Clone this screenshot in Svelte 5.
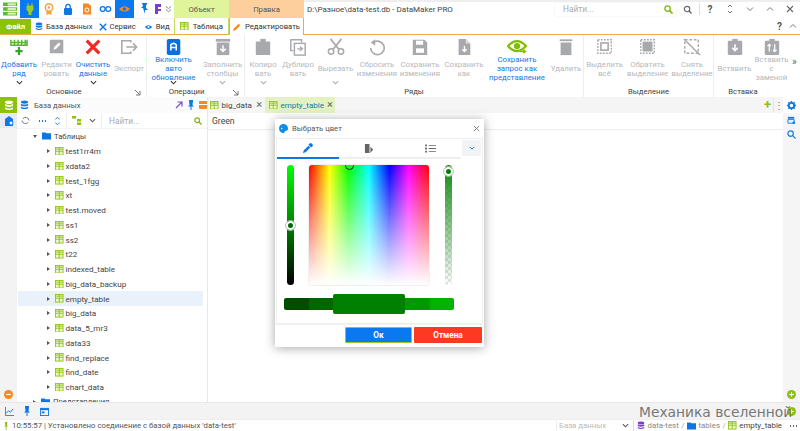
<script>
const groups = [
  { title: 'Основное', width: 147, arrow: true, items: [
    { w: 38, icon: 'add', lines: ['Добавить', 'ряд'], on: true, more: true },
    { w: 37, icon: 'edit', lines: ['Редакти', 'ровать'] },
    { w: 36, icon: 'clear', lines: ['Очистить', 'данные'], on: true, more: true },
    { w: 36, icon: 'export', lines: ['Экспорт'] }
  ]},
  { title: 'Операции', width: 98, arrow: true, items: [
    { w: 53, icon: 'auto', lines: ['Включить', 'авто', 'обновление'], on: true, more: true },
    { w: 45, icon: 'fill', lines: ['Заполнить', 'столбцы'], more: true }
  ]},
  { title: 'Ряды', width: 339, items: [
    { w: 36, icon: 'copy', lines: ['Копиро', 'вать'], more: true },
    { w: 34, icon: 'dup', lines: ['Дублиро', 'вать'] },
    { w: 41, icon: 'cut', lines: ['Вырезать'], more: true },
    { w: 42, icon: 'reset', lines: ['Сбросить', 'изменения'] },
    { w: 44, icon: 'save', lines: ['Сохранить', 'изменения'] },
    { w: 44, icon: 'saveas', lines: ['Сохранить', 'как'] },
    { w: 62, icon: 'view', lines: ['Сохранить', 'запрос как', 'представление'], on: true },
    { w: 36, icon: 'trash', lines: ['Удалить'] }
  ]},
  { title: 'Выделение', width: 130, items: [
    { w: 41, icon: 'selall', lines: ['Выделить', 'всё'] },
    { w: 45, icon: 'invert', lines: ['Обратить', 'выделение'] },
    { w: 44, icon: 'unsel', lines: ['Снять', 'выделение'] }
  ]},
  { title: 'Вставка', width: 86, last: true, items: [
    { w: 41, icon: 'paste', lines: ['Вставить'] },
    { w: 33, icon: 'pastere', lines: ['Вставить', 'с', 'заменой'] }
  ]}
];
const tables = ['test1rr4m','xdata2','test_1fgg','xt','test.moved','ss1','ss2','t22','indexed_table','big_data_backup','empty_table','big_data','data_5_mr3','data33','find_replace','find_date','chart_data'];
const G = '#a7a9ac';
</script>

{#snippet tbl()}
  <svg class="tbl" viewBox="0 0 10 10"><rect x=".5" y=".5" width="9" height="9" fill="#eaf5c8" stroke="#8cc20a"/><path d="M.5 5h9M5 .5v9M.5 2.500h9" stroke="#8cc20a" fill="none"/></svg>
{/snippet}

{#snippet icon(n)}
  <svg class="ric" viewBox="0 0 22 20">
    {#if n === 'add'}
      <path d="M2 2v6h18V2M2 5h18M6 2v6M10 2v6M14 2v6M18 2v6" stroke="#57b52e" stroke-width="1.6" fill="none"/><path d="M11 10v9M7 14.500h8" stroke="#37a52a" stroke-width="2.400"/>
    {:else if n === 'edit'}
      <rect x="3" y="2" width="15" height="15" rx="1" fill={G}/><path d="M7 13l1-3 5-5 2 2-5 5z" fill="#fff"/>
    {:else if n === 'clear'}
      <path d="M4 3l14 14M18 3L4 17" stroke="#ee2a24" stroke-width="3.600"/>
    {:else if n === 'export'}
      <path d="M13 5V3H3v14h10v-2" stroke={G} stroke-width="1.700" fill="none"/><path d="M8 10h11M15.500 6l4 4-4 4" stroke={G} stroke-width="1.700" fill="none"/>
    {:else if n === 'auto'}
      <rect x="3" y="1" width="15" height="18" rx="2" fill="#0a6fe0"/><path d="M7.500 14V7.500q3-3 6 0V14M7.500 10.500h6" stroke="#fff" stroke-width="1.700" fill="none"/>
    {:else if n === 'fill'}
      <rect x="3" y="1" width="16" height="3" fill={G}/><rect x="4" y="5" width="14" height="14" fill={G}/><path d="M11 8v7M8 12l3 3 3-3" stroke="#fff" stroke-width="1.600" fill="none"/>
    {:else if n === 'copy'}
      <rect x="3" y="4" width="16" height="15" rx="1" fill={G}/><rect x="8" y="1" width="6" height="4" fill={G}/>
    {:else if n === 'dup'}
      <path d="M6 14H3V2h12v3" stroke={G} stroke-width="1.600" fill="none"/><rect x="7" y="6" width="12" height="13" stroke={G} stroke-width="1.600" fill="none"/><path d="M10 12h6M13 9.500l3 2.500-3 2.500" stroke={G} fill="none" stroke-width="1.300"/>
    {:else if n === 'cut'}
      <circle cx="5.500" cy="15" r="3" stroke={G} stroke-width="1.700" fill="none"/><circle cx="16.500" cy="15" r="3" stroke={G} stroke-width="1.700" fill="none"/><path d="M7.500 13L17 1M14.500 13L5 1" stroke={G} stroke-width="1.900"/>
    {:else if n === 'reset'}
      <path d="M7 5a7.500 7.500 0 1 1-3 6" stroke={G} stroke-width="1.800" fill="none"/><path d="M9 1.500L4 5l5 3.500z" fill={G}/>
    {:else if n === 'save'}
      <path d="M3 2h13l3 3v14H3z" fill={G}/><rect x="6.500" y="3" width="8" height="4.500" fill="#fff"/><rect x="6.500" y="11.500" width="9" height="5" fill="#fff"/>
    {:else if n === 'saveas'}
      <path d="M5 1h8l5 5v13H5z" fill={G}/><path d="M13 1v5h5" fill="#ddd"/><path d="M11.500 9v6M9 12.500l2.500 2.500 2.500-2.500" stroke="#fff" stroke-width="1.500" fill="none"/>
    {:else if n === 'view'}
      <path d="M1 9q10-11 20 0-10 11-20 0z" fill="none" stroke="#7fbf00" stroke-width="2.400"/><circle cx="11" cy="9" r="3.500" fill="#7fbf00"/><path d="M14 15h6M18 13l2.500 2-2.500 2" stroke="#7fbf00" stroke-width="1.500" fill="#fff"/>
    {:else if n === 'trash'}
      <rect x="4" y="1.500" width="14" height="2" fill={G}/><path d="M5 5h12v14H5z" fill={G}/>
    {:else if n === 'selall'}
      <rect x="3" y="2" width="15" height="15" fill="none" stroke={G} stroke-width="1.600" stroke-dasharray="2 1.400"/><rect x="6.500" y="5.500" width="8" height="8" fill="none" stroke={G} stroke-width="1.800"/>
    {:else if n === 'invert'}
      <rect x="3" y="2" width="15" height="15" fill="none" stroke={G} stroke-width="1.600" stroke-dasharray="2 1.400"/><rect x="5" y="4" width="11" height="11" fill={G}/>
    {:else if n === 'unsel'}
      <rect x="3" y="2" width="15" height="15" fill="none" stroke={G} stroke-width="1.600" stroke-dasharray="3 2"/><path d="M2 1l18 18" stroke={G} stroke-width="1.600"/>
    {:else if n === 'paste'}
      <rect x="3" y="3" width="16" height="16" rx="1.500" fill={G}/><rect x="8" y="1" width="6" height="4" fill={G}/><path d="M11 7v7M8 11l3 3 3-3" stroke="#fff" stroke-width="1.700" fill="none"/>
    {:else if n === 'pastere'}
      <rect x="3" y="3" width="16" height="16" rx="1.500" fill={G}/><rect x="8" y="1" width="6" height="4" fill={G}/><path d="M8 15V7M6 9l2-2 2 2M14 7v8M12 13l2 2 2-2" stroke="#fff" stroke-width="1.400" fill="none"/>
    {/if}
  </svg>
{/snippet}

<div class="app">
  <header class="top">
    <div class="qat">
      <div class="strip">
        <span class="q logo"><svg viewBox="0 0 12 12" width="14" height="14"><path d="M0 .5h12v3H0zM0 4.500h12v3H0zM0 8.500h12v3H0z" fill="#5fb92a"/><path d="M4 1h7v2H4zM4 5h7v2H4zM4 9h7v2H4z" fill="#d9efb6"/></svg></span>
        <span class="q act"><svg viewBox="0 0 12 12" width="12" height="12"><path d="M4 0v3M8 0v3M3 3h6v4l-2 2v3H5V9L3 7z" stroke="#9ccc20" stroke-width="1" fill="#9ccc20"/></svg></span>
        <span class="q"><svg viewBox="0 0 12 12" width="12" height="12"><circle cx="6" cy="4.500" r="3.700" fill="none" stroke="#f5a33c" stroke-width="1.500"/><circle cx="6" cy="4.500" r="1.200" fill="#f5a33c"/><path d="M3.500 8v4l2.500-1 2.500 1V8" fill="#f5a33c"/></svg></span>
        <span class="q"><svg viewBox="0 0 12 12" width="12" height="12"><rect x="2" y="5" width="8" height="7" rx="1" fill="#0e77e6"/><path d="M3.800 5V3.500a2.200 2.200 0 0 1 4.400 0V5" fill="none" stroke="#0e77e6" stroke-width="1.300"/></svg></span>
        <span class="q"><svg viewBox="0 0 12 12" width="12" height="12"><path d="M2 .5h5.500L10 3v8.500H2z" fill="#f58a1f"/><circle cx="6" cy="7" r="2" fill="none" stroke="#fff"/></svg></span>
        <span class="q"><svg viewBox="0 0 14 12" width="13" height="12"><circle cx="4" cy="6" r="2.600" fill="none" stroke="#0e77e6" stroke-width="1.400"/><circle cx="10" cy="6" r="2.600" fill="none" stroke="#0e77e6" stroke-width="1.400"/></svg></span>
        <span class="q act"><svg viewBox="0 0 14 12" width="13" height="12"><path d="M1 6q6-6 12 0-6 6-12 0z" fill="#f58a1f"/><circle cx="7" cy="6" r="1.800" fill="#0e77e6"/></svg></span>
        <span class="q"><svg viewBox="0 0 12 12" width="12" height="12"><path d="M4 0h5v1.500L8 2v3l2 2H7v4L5 5 3 5l2-2z" fill="#0e77e6"/></svg></span>
        <span class="q nar"><svg viewBox="0 0 8 12" width="8" height="12"><path d="M1 1h6v3H4v2h3v2H4v3H1z" fill="#7a3fd0"/></svg></span>
        <span class="q nar"><svg viewBox="0 0 8 8" width="7" height="8"><path d="M1 1l3 2.500L7 1M1 4.500L4 7l3-2.500" fill="none" stroke="#777"/></svg></span>
      </div>
      <nav class="tabs">
        <span class="file">Файл</span>
        <span class="tab"><svg viewBox="0 0 10 10" width="8" height="9"><ellipse cx="5" cy="1.800" rx="4" ry="1.800" fill="#0e77e6"/><path d="M1 3.500q4 2 8 0v2q-4 2-8 0zM1 7q4 2 8 0v1.500q-4 2-8 0z" fill="#0e77e6"/></svg>База данных</span>
        <span class="tab"><svg viewBox="0 0 10 10" width="8" height="8"><path d="M1 1l8 8M9 1L1 9" stroke="#0e77e6" stroke-width="1.800"/></svg>Сервис</span>
        <span class="tab"><svg viewBox="0 0 12 10" width="9" height="8"><path d="M1 5q5-5 10 0-5 5-10 0z" fill="#0e77e6"/><circle cx="6" cy="5" r="1.300" fill="#fff"/></svg>Вид</span>
      </nav>
    </div>
    <div class="ctx ctx-obj">
      <div class="ctx-head">Объект</div>
      <div class="ctx-tab">{@render tbl()}Таблица</div>
    </div>
    <div class="ctx ctx-edit">
      <div class="ctx-head">Правка</div>
      <div class="ctx-tab"><svg viewBox="0 0 10 10" width="8" height="8"><path d="M0 10l1-3 6-6 2 2-6 6z" fill="#f58a1f"/></svg>Редактировать</div>
    </div>
    <div class="title">
      <div class="title-row">
        <span class="path">D:\Разное\data-test.db - DataMaker PRO</span>
        <span class="search">Найти...<svg viewBox="0 0 10 10" width="9" height="9"><circle cx="4" cy="4" r="3" fill="none" stroke="#85b816" stroke-width="1.500"/><path d="M6 6l3.500 3.500" stroke="#85b816" stroke-width="1.800"/></svg></span>
        <span class="win sq"><svg viewBox="0 0 10 10" width="9" height="9"><circle cx="4.500" cy="4.500" r="3" fill="none" stroke="#666" stroke-width="1.300"/><path d="M6.500 6.500l3 3" stroke="#666" stroke-width="1.500"/></svg></span>
        <span class="win">?</span>
        <span class="win"><svg viewBox="0 0 8 10" width="8" height="10"><path d="M2 3l2-2 2 2M2 7l2 2 2-2" fill="none" stroke="#777"/></svg></span>
        <span class="win"><svg viewBox="0 0 8 6" width="8" height="6"><path d="M1 1.500l3 3 3-3" fill="none" stroke="#777"/></svg></span>
        <span class="win"><svg viewBox="0 0 8 6" width="8" height="6"><path d="M1 4.500l3-3 3 3" fill="none" stroke="#777"/></svg></span>
        <span class="win"><svg viewBox="0 0 8 8" width="8" height="8"><path d="M1 1l6 6M7 1L1 7" stroke="#666" stroke-width="1.100"/></svg></span>
      </div>
      <div class="help-row"><span>?</span><svg viewBox="0 0 8 6" width="8" height="6"><path d="M1 4.500l3-3 3 3" fill="none" stroke="#777"/></svg></div>
    </div>
  </header>

  <section class="ribbon">
    {#each groups as g}
      <div class="group" class:last={g.last} style="width:{g.width}px">
        <div class="items">
          {#each g.items as b}
            <div class="btn" class:on={b.on} style="width:{b.w}px">
              {@render icon(b.icon)}
              <div class="lbl">{#each b.lines as l}<span>{l}</span>{/each}</div>
              <div class="chev">{#if b.more}<svg viewBox="0 0 8 5" width="7" height="5"><path d="M1 1l3 3 3-3" fill="none" stroke={b.on ? '#333' : '#aaa'} stroke-width="1.200"/></svg>{/if}</div>
            </div>
          {/each}
          {#if g.last}<span class="overflow">»</span>{/if}
        </div>
        <div class="gtitle" class:shift={g.arrow} class:shift2={g.last}>{g.title}
          {#if g.arrow}<svg class="garrow" viewBox="0 0 7 7" width="7" height="7"><path d="M1 1l5 5M6 2v4H2" fill="none" stroke="#777"/></svg>{/if}
        </div>
      </div>
    {/each}
  </section>

  <main class="work">
    <aside class="rail">
      <span class="rail-on"><svg viewBox="0 0 10 10" width="10" height="11"><ellipse cx="5" cy="1.800" rx="4" ry="1.800" fill="#fff"/><path d="M1 3.500q4 2 8 0v2q-4 2-8 0zM1 7q4 2 8 0v1.500q-4 2-8 0z" fill="#fff"/></svg></span>
      <span class="rail-two"><svg viewBox="0 0 10 10" width="10" height="10"><path d="M5 0l4 3v7H1V3z" fill="#0e77e6"/><circle cx="7" cy="7" r="2" fill="#fff" stroke="#0e77e6"/></svg></span>
      <span class="rail-bottom"><svg viewBox="0 0 10 10" width="9" height="9"><circle cx="5" cy="5" r="5" fill="#f58a1f"/><path d="M2.500 5h5" stroke="#fff" stroke-width="1.400"/></svg></span>
    </aside>

    <div class="db">
      <div class="db-head">
        <svg viewBox="0 0 10 10" width="9" height="10"><ellipse cx="5" cy="1.800" rx="4" ry="1.800" fill="#0e77e6"/><path d="M1 3.500q4 2 8 0v2q-4 2-8 0zM1 7q4 2 8 0v1.500q-4 2-8 0z" fill="#0e77e6"/></svg>
        <span class="db-title">База данных</span>
        <svg viewBox="0 0 8 8" width="8" height="8"><path d="M1 7l6-6M2.500 1H7v4.500" fill="none" stroke="#7a52c8" stroke-width="1.200"/></svg>
        <svg viewBox="0 0 8 10" width="8" height="10"><path d="M2 0h4v1L5.500 5 7 6.500H4.500V10h-1V6.500H1L2.500 5 2 1z" fill="#0e77e6"/></svg>
        <span class="minus"></span>
      </div>
      <div class="db-tools">
        <svg viewBox="0 0 10 10" width="9" height="9"><path d="M2 3a4 4 0 0 1 7 2M8 7a4 4 0 0 1-7-2" fill="none" stroke="#666"/></svg>
        <span class="dots"></span>
        <svg viewBox="0 0 8 10" width="7" height="10"><path d="M1.500 3L4 1l2.500 2M1.500 7L4 9l2.500-2" fill="none" stroke="#0e77e6"/></svg>
        <span class="tsep"></span>
        <svg viewBox="0 0 9 9" width="9" height="9"><path d="M0 0h4v2.500H0zM5 3h4v2.500H5zM5 6.500h4V9H5z" fill="#8cc20a"/></svg>
        <svg viewBox="0 0 8 5" width="7" height="5"><path d="M1 1l3 3 3-3" fill="none" stroke="#555" stroke-width="1.200"/></svg>
        <span class="tsep"></span>
        <span class="find">Найти...<svg viewBox="0 0 10 10" width="8" height="8"><circle cx="4" cy="4" r="3" fill="none" stroke="#85b816" stroke-width="1.500"/><path d="M6 6l3.500 3.500" stroke="#85b816" stroke-width="1.800"/></svg></span>
      </div>
      <div class="tree">
        <div class="row parent"><i class="tri-d"></i><svg viewBox="0 0 10 8" width="9" height="8"><path d="M0 0h4l1 1h5v7H0z" fill="#0e77e6"/></svg>Таблицы</div>
        {#each tables as t}
          <div class="row child" class:sel={t === 'empty_table'}><i class="tri-r"></i>{@render tbl()}{t}</div>
        {/each}
        <div class="row parent"><i class="tri-r"></i><svg viewBox="0 0 10 8" width="9" height="8"><path d="M0 0h4l1 1h5v7H0z" fill="#0e77e6"/></svg>Представления</div>
      </div>
    </div>

    <div class="doc">
      <div class="doc-tabs">
        <span class="dtab">{@render tbl()}big_data<b>×</b></span>
        <span class="dtab cur">{@render tbl()}empty_table<b>×</b></span>
        <span class="grow"></span>
        <span class="plus">+</span>
        <span class="vdots">⋮</span>
      </div>
      <div class="grid-head">Green</div>
    </div>

    <aside class="rail-r">
      <span class="gear"><svg viewBox="0 0 10 10" width="9" height="9"><circle cx="5" cy="5" r="3" fill="none" stroke="#0e77e6" stroke-width="2"/><path d="M5 0v2M5 8v2M0 5h2M8 5h2M1.500 1.500l1.500 1.500M7 7l1.500 1.500M8.500 1.500L7 3M3 7L1.500 8.500" stroke="#0e77e6" stroke-width="1.500"/></svg></span>
      <span><svg viewBox="0 0 10 10" width="9" height="9"><rect x="1" y="1" width="7" height="2" fill="#0e77e6"/><path d="M1 4h7v4H1z" fill="none" stroke="#0e77e6"/><circle cx="7.500" cy="7.500" r="1.500" fill="#0e77e6"/></svg></span>
      <span><svg viewBox="0 0 10 10" width="9" height="9"><circle cx="4" cy="4" r="3" fill="none" stroke="#0e77e6" stroke-width="1.300"/><path d="M6.500 6.500l3 3" stroke="#0e77e6" stroke-width="1.300"/></svg></span>
      <span class="grow"></span>
      <span class="gplus"><svg viewBox="0 0 10 10" width="9" height="9"><circle cx="5" cy="5" r="5" fill="#8cc20a"/><path d="M2.500 5h5M5 2.500v5" stroke="#fff" stroke-width="1.300"/></svg></span>
    </aside>
  </main>

  <div class="bottom">
    <svg viewBox="0 0 10 10" width="9" height="9"><path d="M.5 0v9.500H10" fill="none" stroke="#0e77e6"/><path d="M1.500 7l2.500-3 2 2 3-4" fill="none" stroke="#0e77e6"/></svg>
    <svg viewBox="0 0 8 10" width="8" height="10"><path d="M2 0h4v1L5.500 5 7 6.500H4.500V10h-1V6.500H1L2.500 5 2 1z" fill="#0e77e6"/></svg>
    <svg viewBox="0 0 10 10" width="9" height="9"><rect x=".5" y="1.500" width="9" height="8" fill="none" stroke="#0e77e6"/><path d="M.5 1.500h9v2h-9z" fill="#0e77e6"/><rect x="2" y="5" width="3" height="2" fill="#0e77e6"/></svg>
    <span class="grow"></span>
    <svg viewBox="0 0 10 10" width="9" height="9"><circle cx="5" cy="5" r="5" fill="#8cc20a"/><path d="M2.500 5h5M5 2.500v5" stroke="#fff" stroke-width="1.300"/></svg>
  </div>

  <footer class="status">
    <svg viewBox="0 0 6 10" width="5" height="8"><path d="M1 0h3v1l-.5 3L5 5.500H3V10H2V5.500H0L1.500 4 1 1z" fill="#8cc20a"/></svg>
    <span class="msg">10:55:57 | Установлено соединение с базой данных 'data-test'</span>
    <span class="grow"></span>
    <span class="combo">База данных<svg viewBox="0 0 8 5" width="7" height="5"><path d="M1 1l3 3 3-3" fill="none" stroke="#555" stroke-width="1.200"/></svg></span>
    <span class="crumbs">
      <svg viewBox="0 0 10 10" width="8" height="9"><ellipse cx="5" cy="1.800" rx="4" ry="1.800" fill="#7a3fd0"/><path d="M1 3.500q4 2 8 0v2q-4 2-8 0zM1 7q4 2 8 0v1.500q-4 2-8 0z" fill="#7a3fd0"/></svg>
      data-test <em>/</em>
      <svg viewBox="0 0 10 8" width="9" height="8"><path d="M0 0h4l1 1h5v7H0z" fill="#0e77e6"/></svg>
      tables <em>/</em>
      {@render tbl()}
      <strong>empty_table</strong>
    </span>
    <span class="sdots"></span>
  </footer>

  <div class="mark">Механика вселенной</div>

  <div class="dialog">
    <div class="dhead">
      <svg viewBox="0 0 10 10" width="9" height="9"><path d="M5 0a5 5 0 1 0 0 10c1.500 0 1-1.500 1.500-2s3.500 0 3.500-3A5 5 0 0 0 5 0z" fill="#0e8ce6"/><circle cx="3" cy="5" r=".8" fill="#fff"/></svg>
      <span>Выбрать цвет</span>
      <svg viewBox="0 0 8 8" width="7" height="7"><path d="M1 1l6 6M7 1L1 7" stroke="#777" stroke-width="1"/></svg>
    </div>
    <div class="dbody">
      <div class="dtabs">
        <span class="ct active"><svg viewBox="0 0 12 12" width="11" height="11"><path d="M1 11l1-3 5-5 2 2-5 5zM7 2l1.500-1.500q1-1 2.500.5t.5 2.500L10 5z" fill="#0e77e6"/></svg></span>
        <span class="ct"><svg viewBox="0 0 12 12" width="11" height="11"><path d="M1 1h5v10H1zM7 4l3 3-3 4z" fill="#666"/></svg></span>
        <span class="ct"><svg viewBox="0 0 12 10" width="11" height="9"><path d="M0 .5h2v2H0zM0 4h2v2H0zM0 7.500h2v2H0zM4 1h8v1H4zM4 4.500h8v1H4zM4 8h8v1H4z" fill="#666"/></svg></span>
        <span class="cdrop"><svg viewBox="0 0 8 5" width="6" height="4"><path d="M1 1l3 3 3-3" fill="none" stroke="#0e77e6" stroke-width="1.300"/></svg></span>
      </div>
      <div class="picker">
        <div class="vs vs-l"><span class="thumb t1"></span></div>
        <div class="spectrum"><span class="sthumb"></span></div>
        <div class="vs vs-r"><span class="thumb t2"></span></div>
      </div>
      <div class="swatches">
        <span style="background:#004d00"></span>
        <span style="background:#006600"></span>
        <span class="big" style="background:#008000"></span>
        <span style="background:#009900"></span>
        <span style="background:#00b300"></span>
      </div>
    </div>
    <div class="dfoot">
      <button class="ok">Ок</button>
      <button class="cancel">Отмена</button>
    </div>
  </div>
</div>

<style>
:global(body) { margin: 0; }
.app { position: relative; width: 800px; height: 431px; overflow: hidden; background: #fff; font-family: Roboto, "Noto Sans", sans-serif; font-size: 7.700px; color: #444; display: flex; flex-direction: column; }
.grow { flex: 1; }
svg { flex: none; display: block; }
.tbl { width: 8.500px; height: 8.500px; }

.top { display: flex; height: 35px; flex: none; }
.qat { width: 175px; display: flex; flex-direction: column; }
.strip { height: 18px; display: flex; background: #fff; }
.q { width: 19px; height: 18px; display: flex; align-items: center; justify-content: center; flex: none; }
.q.act { background: #0a78f0; }
.q.logo { width: 20px; }
.q.nar { width: 10px; }
.tabs { height: 17px; display: flex; align-items: center; border-bottom: 1px solid #f5a54a; border-top: 1px solid #f2f2f2; box-sizing: border-box; white-space: nowrap; }
.file { width: 31px; height: 100%; background: #8cc20a; color: #fff; font-weight: 700; display: flex; align-items: center; justify-content: center; flex: none; }
.tab { display: flex; align-items: center; gap: 3px; color: #333; flex: none; }
.tab:nth-child(2) { margin-left: 4px; }
.tab:nth-child(3) { margin-left: 6px; }
.tab:nth-child(4) { margin-left: 8px; }
.ctx { display: flex; flex-direction: column; flex: none; }
.ctx-head { height: 18px; display: flex; align-items: center; justify-content: center; color: #555; }
.ctx-tab { height: 17px; display: flex; align-items: center; justify-content: center; gap: 4px; color: #333; box-sizing: border-box; white-space: nowrap; }
.ctx-obj { width: 55px; }
.ctx-obj .ctx-head { background: #e0f49c; }
.ctx-obj .ctx-tab { border-left: 1px solid #c3de5f; border-right: 1px solid #c3de5f; border-bottom: 1px solid #f5a54a; }
.ctx-edit { width: 75px; }
.ctx-edit .ctx-head { background: #fccf9c; }
.ctx-edit .ctx-tab { border-left: 1px solid #f5a54a; border-right: 1px solid #f5a54a; }
.title { flex: 1; display: flex; flex-direction: column; border-bottom: 1px solid #f5a54a; box-sizing: border-box; }
.title-row { height: 18px; display: flex; align-items: center; background: linear-gradient(#eee 2px, #fff 2px); }
.path { width: 251px; padding-left: 3px; box-sizing: border-box; color: #444; font-size: 8px; white-space: nowrap; }
.search { width: 121px; height: 13px; display: flex; align-items: center; justify-content: space-between; padding: 0 3px 0 8px; box-sizing: border-box; color: #aaa; font-size: 8.300px; box-shadow: 0 0 1px #ddd; }
.win { width: 20px; display: flex; justify-content: center; align-items: center; color: #555; font-size: 10px; font-weight: 700; }
.win.sq { width: 23px; border-right: 1px solid #ddd; height: 12px; }
.help-row { height: 16px; display: flex; align-items: center; justify-content: flex-end; gap: 7px; padding-right: 3px; color: #555; font-size: 10px; font-weight: 700; }

.ribbon { display: flex; height: 62px; flex: none; background: #fff; }
.group { display: flex; flex-direction: column; border-right: 1px solid #eee; box-sizing: border-box; flex: none; position: relative; }
.group.last { border-right: 0; }
.items { display: flex; height: 52px; flex: none; }
.btn { display: flex; flex-direction: column; align-items: center; flex: none; color: #b5b8bb; padding-top: 3px; box-sizing: border-box; }
.btn.on { color: #1278e8; }
.ric { width: 20px; height: 18px; }
.lbl { height: 23px; margin-top: 1px; display: flex; flex-direction: column; align-items: center; justify-content: center; font-size: 7.800px; line-height: 9px; white-space: nowrap; }
.chev { height: 5px; }
.overflow { align-self: center; color: #666; font-size: 10px; margin-left: 4px; }
.gtitle { height: 10px; line-height: 10px; text-align: center; color: #444; white-space: nowrap; }
.gtitle.shift { padding-right: 18px; }
.gtitle.shift2 { padding-right: 28px; }
.garrow { position: absolute; right: 5px; bottom: 1px; }

.work { flex: 1; min-height: 0; display: flex; }
.rail { width: 17px; background: #f3f3f3; display: flex; flex-direction: column; flex: none; }
.rail span { display: flex; align-items: center; justify-content: center; }
.rail-on { height: 16px; background: #8cc20a; }
.rail-two { height: 15px; background: #e6ebf2; }
.rail-bottom { margin-top: auto; height: 16px; }
.db { width: 191px; display: flex; flex-direction: column; border-right: 1px solid #e8e8e8; box-sizing: border-box; flex: none; }
.db-head { height: 16px; display: flex; align-items: center; padding-left: 3px; gap: 4px; flex: none; background: #fbfbfb; }
.db-title { width: 141px; padding-left: 1px; color: #555; }
.minus { width: 8px; height: 8px; border-radius: 1px; background: linear-gradient(#f58a1f 3px, #fff 3px, #fff 4.500px, #f58a1f 4.500px); }
.db-tools { height: 16px; flex: none; display: flex; align-items: center; padding-left: 4px; gap: 8px; border-bottom: 1px solid #f4f4f4; box-sizing: border-box; }
.dots { width: 8px; height: 2px; background: radial-gradient(circle, #0e77e6 1px, transparent 1px) 0 0 / 3px 2px; }
.tsep { width: 1px; height: 14px; background: #eee; margin: 0 -3px; }
.find { flex: 1; display: flex; align-items: center; justify-content: space-between; padding: 0 5px 0 0; color: #aaa; margin-left: 2px; font-size: 8.300px; }
.tree { flex: 1; min-height: 0; overflow: hidden; }
.row { height: 14.750px; display: flex; align-items: center; gap: 3px; color: #444; margin-right: 4px; font-size: 8.100px; }
.row.parent { padding-left: 16px; font-size: 7.700px; }
.row.child { padding-left: 30px; }
.row.sel { background: #e9f2fb; margin-left: 1px; padding-left: 29px; }
.row .tbl { margin-right: -1px; }
.tri-d { width: 0; height: 0; border: 2.500px solid transparent; border-top: 3px solid #555; border-bottom: 0; margin-right: 2px; }
.tri-r { width: 0; height: 0; border: 2.500px solid transparent; border-left: 3px solid #555; border-right: 0; margin-right: 2px; }
.doc { flex: 1; min-width: 0; display: flex; flex-direction: column; }
.doc-tabs { height: 16px; flex: none; display: flex; align-items: center; background: #f5f5f5; font-size: 8px; }
.dtab { display: flex; align-items: center; gap: 3px; height: 16px; padding: 0 3px 0 2px; box-sizing: border-box; width: 57px; color: #444; flex: none; }
.dtab b { font-weight: 400; font-size: 11px; margin-left: auto; color: #666; line-height: 10px; }
.dtab.cur { background: #e3f2c0; color: #1278a8; width: 70px; padding-left: 4px; }
.plus { color: #8cc20a; font-size: 13px; font-weight: 700; line-height: 14px; width: 11px; text-align: center; border-right: 1px solid #e4e4e4; }
.vdots { width: 9px; text-align: center; color: #777; font-size: 10px; }
.grid-head { height: 16px; line-height: 16px; padding-left: 4px; border-bottom: 1px solid #ececec; color: #444; font-size: 8.600px; }
.rail-r { width: 17px; background: #f5f5f5; display: flex; flex-direction: column; align-items: center; flex: none; }
.rail-r span { height: 14px; display: flex; align-items: center; justify-content: center; width: 100%; }
.rail-r .gear { height: 16px; background: #fff; }
.rail-r .grow { flex: 1; }
.rail-r .gplus { height: 16px; }

.bottom { height: 17px; flex: none; display: flex; align-items: center; gap: 9px; padding: 0 4px 0 5px; background: #f3f3f3; border-top: 1px solid #e8e8e8; box-sizing: border-box; }
.status { height: 12px; flex: none; display: flex; align-items: center; gap: 3px; padding-left: 4px; border-top: 1px solid #eee; box-sizing: border-box; color: #555; font-size: 7.800px; white-space: nowrap; }
.combo { width: 78px; height: 12px; display: flex; align-items: center; justify-content: space-between; padding: 0 4px 0 2px; box-sizing: border-box; color: #bbb; border-left: 1px solid #eee; border-right: 1px solid #ddd; flex: none; }
.crumbs { display: flex; align-items: center; gap: 2.500px; color: #888; width: 149px; box-sizing: border-box; flex: none; font-size: 7.900px; }
.crumbs em { font-style: normal; color: #aaa; }
.crumbs strong { font-weight: 400; color: #444; }
.sdots { width: 8px; height: 2px; margin-right: 3px; background: radial-gradient(circle, #666 1px, transparent 1px) 0 0 / 3px 2px; flex: none; }
.mark { position: absolute; left: 639px; top: 402px; font-family: "DejaVu Sans", sans-serif; font-size: 13.800px; line-height: 20px; color: #777; white-space: nowrap; }

.dialog { position: absolute; left: 275px; top: 119px; width: 209px; height: 228px; background: #fff; box-shadow: 0 1px 10px rgba(0,0,0,.35); display: flex; flex-direction: column; }
.dhead { height: 18px; display: flex; align-items: center; gap: 4px; padding: 0 4px; color: #555; flex: none; }
.dhead span { flex: 1; }
.dbody { margin: 1px 1px 0; height: 186px; border: 1px solid #efefef; box-sizing: border-box; display: flex; flex-direction: column; flex: none; }
.dtabs { height: 20px; display: flex; flex: none; align-items: stretch; }
.ct { width: 61.500px; flex: none; display: flex; align-items: center; justify-content: center; border-bottom: 2px solid #efefef; box-sizing: border-box; }
.ct.active { border-bottom-color: #0e77e6; }
.ct:nth-child(3) { width: 61px; }
.cdrop { width: 19px; height: 16px; margin: 1px 0 0 1px; background: #f2f3f5; display: flex; align-items: center; justify-content: center; }
.picker { display: flex; padding: 6px 0 0 10px; height: 120px; flex: none; }
.vs { width: 7px; height: 120px; border-radius: 4px; position: relative; flex: none; }
.vs-l { background: linear-gradient(#00ff00, #008000 50%, #000); }
.vs-r { margin-left: 15.500px; background: linear-gradient(#108a10, rgba(0,128,0,0)), repeating-conic-gradient(#e4e4e4 0 25%, #fff 0 50%) 0 0 / 6px 6px; }
.spectrum { width: 120px; height: 120px; margin-left: 15px; border-radius: 3px; position: relative; flex: none; background: linear-gradient(rgba(255,255,255,0), #fff), linear-gradient(90deg, #f00, #ff0 17%, #0f0 33%, #0ff 50%, #00f 67%, #f0f 83%, #f00); overflow: hidden; box-shadow: 0 0 0 1px #f0f0f0; }
.sthumb { position: absolute; left: 36px; top: -4px; width: 7px; height: 7px; border-radius: 50%; border: 1px solid #222; }
.thumb { position: absolute; left: -1px; width: 5px; height: 5px; border: 2px solid #fff; border-radius: 50%; outline: .5px solid #bbb; }
.t1 { top: 56px; background: #006800; }
.t2 { top: 2px; background: #008000; }
.swatches { display: flex; align-items: center; margin: 9px 0 0 7px; height: 20px; }
.swatches span { width: 24.500px; height: 12px; }
.swatches span:first-child { border-radius: 2px 0 0 2px; }
.swatches span:last-child { border-radius: 0 2px 2px 0; }
.swatches .big { width: 72px; height: 20px; border-radius: 2px; }
.dfoot { flex: 1; display: flex; justify-content: flex-end; gap: 2px; padding: 2px 2px 0 0; border-top: 1px solid #f2f2f2; }
.dfoot button { height: 16px; padding: 0; border: 0; font: 700 8.200px Roboto, sans-serif; color: #fff; border-radius: 1px; box-sizing: border-box; }
.dfoot .ok { width: 67px; background: #0a78f0; border: 1px solid #9cc52a; }
.cancel { width: 68px; background: #fb3a21; }
</style>
